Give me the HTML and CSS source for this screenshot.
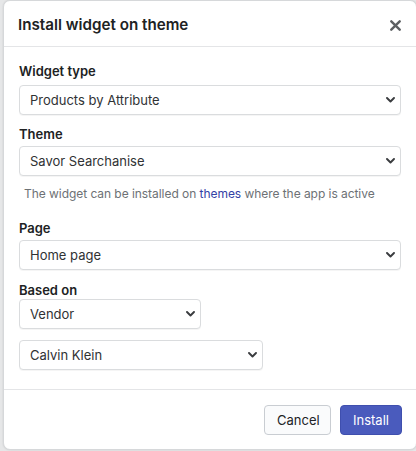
FILE: index.html
```html
<!DOCTYPE html>
<html lang="en">
<head>
<meta charset="utf-8">
<title>Install widget on theme</title>
<link rel="stylesheet" href="styles.css">
</head>
<body>
<div class="modal">
  <div class="modal-header">
    <h2 class="modal-title">Install widget on theme</h2>
    <button class="close" type="button" aria-label="Close">
      <svg width="11" height="11" viewBox="0 0 11 11"><path d="M1.3 1.3 L9.7 9.7 M9.7 1.3 L1.3 9.7" stroke="#5c5f62" stroke-width="2.4" stroke-linecap="round" fill="none"/></svg>
    </button>
  </div>
  <div class="modal-body">
    <label class="label label-type">Widget type</label>
    <div class="select">
      <span class="select-value">Products by Attribute</span>
      <svg class="chevron" width="9" height="6" viewBox="0 0 9 6"><path d="M1 1 L4.5 4.5 L8 1" stroke="#3a3c3f" stroke-width="1.9" fill="none" stroke-linecap="round" stroke-linejoin="round"/></svg>
    </div>

    <label class="label label-theme">Theme</label>
    <div class="select">
      <span class="select-value">Savor Searchanise</span>
      <svg class="chevron" width="9" height="6" viewBox="0 0 9 6"><path d="M1 1 L4.5 4.5 L8 1" stroke="#3a3c3f" stroke-width="1.9" fill="none" stroke-linecap="round" stroke-linejoin="round"/></svg>
    </div>
    <p class="help">The widget can be installed on <a href="#" class="link">themes</a> where the app is active</p>

    <label class="label label-page">Page</label>
    <div class="select">
      <span class="select-value">Home page</span>
      <svg class="chevron" width="9" height="6" viewBox="0 0 9 6"><path d="M1 1 L4.5 4.5 L8 1" stroke="#3a3c3f" stroke-width="1.9" fill="none" stroke-linecap="round" stroke-linejoin="round"/></svg>
    </div>

    <label class="label label-based">Based on</label>
    <div class="select select-vendor">
      <span class="select-value">Vendor</span>
      <svg class="chevron" width="9" height="6" viewBox="0 0 9 6"><path d="M1 1 L4.5 4.5 L8 1" stroke="#3a3c3f" stroke-width="1.9" fill="none" stroke-linecap="round" stroke-linejoin="round"/></svg>
    </div>
    <div class="select select-brand">
      <span class="select-value">Calvin Klein</span>
      <svg class="chevron" width="9" height="6" viewBox="0 0 9 6"><path d="M1 1 L4.5 4.5 L8 1" stroke="#3a3c3f" stroke-width="1.9" fill="none" stroke-linecap="round" stroke-linejoin="round"/></svg>
    </div>
  </div>
  <div class="modal-footer">
    <button class="btn btn-secondary" type="button">Cancel</button>
    <button class="btn btn-primary" type="button">Install</button>
  </div>
</div>
</body>
</html>
```

FILE: styles.css
```css
* { box-sizing: border-box; }

html, body {
  margin: 0;
  padding: 0;
}

body {
  background: #e6e7e8;
  font-family: Inter, "Liberation Sans", sans-serif;
  color: #202223;
  font-size: 13px;
  height: 451px;
  overflow: hidden;
}

.modal {
  margin-left: 3px;
  width: 414px;
  background: #fff;
  border: 1px solid #d6d8da;
  border-radius: 7px;
  box-shadow: 0 0 2px rgba(0,0,0,0.12);
  display: flex;
  flex-direction: column;
}

.modal-header {
  flex: none;
  height: 46px;
  border-bottom: 1px solid #e4e5e7;
  display: flex;
  align-items: center;
  justify-content: space-between;
  padding: 0 15px 0 14px;
}

.modal-title {
  margin: 0;
  font-size: 15.2px;
  font-weight: 600;
  line-height: 20px;
  color: #202223;
  padding-top: 2px;
}

.close {
  border: 0;
  background: none;
  padding: 0;
  width: 11px;
  height: 11px;
  display: flex;
  margin-top: 4px;
}

.modal-body {
  flex: none;
  padding: 16px 15px 19px 15px;
  display: flex;
  flex-direction: column;
  align-items: flex-start;
}

.label {
  display: block;
  font-weight: 600;
  font-size: 13px;
  line-height: 16px;
  color: #202223;
}

.label-type { margin-bottom: 6px; }
.label-theme { margin-top: 11px; margin-bottom: 4px; }
.label-page { margin-top: 18px; margin-bottom: 4px; }
.label-based { margin-top: 12px; margin-bottom: 1px; }

.select {
  flex: none;
  width: 382px;
  height: 30px;
  border: 1px solid #dadcde;
  border-radius: 4px;
  background: #fff;
  display: flex;
  align-items: center;
  justify-content: space-between;
  padding: 0 5px 0 10px;
  box-shadow: 0 1px 0 rgba(0,0,0,0.04);
}

.select-value {
  font-size: 13px;
  color: #303234;
}

.chevron { flex: none; }

.select-vendor { width: 182px; }
.select-brand { width: 244px; margin-top: 11px; }

.help {
  margin: 10px 0 0 5px;
  font-size: 12px;
  letter-spacing: -0.05px;
  line-height: 16px;
  color: #6d7175;
  white-space: nowrap;
}

.link {
  color: #3341a5;
  text-decoration: none;
}

.modal-footer {
  flex: none;
  border-top: 1px solid #e4e5e7;
  padding: 15px 14px 14px 0;
  display: flex;
  justify-content: flex-end;
  gap: 9px;
}

.btn {
  height: 30px;
  border-radius: 4px;
  font-family: Inter, "Liberation Sans", sans-serif;
  font-size: 13px;
  padding: 0 12px;
}

.btn-secondary {
  width: 67px;
  background: #fafbfc;
  border: 1px solid #c9cdd2;
  color: #212326;
}

.btn-primary {
  width: 62px;
  background: #4a5bbd;
  border: 1px solid #3f4fae;
  color: #fff;
}
```
